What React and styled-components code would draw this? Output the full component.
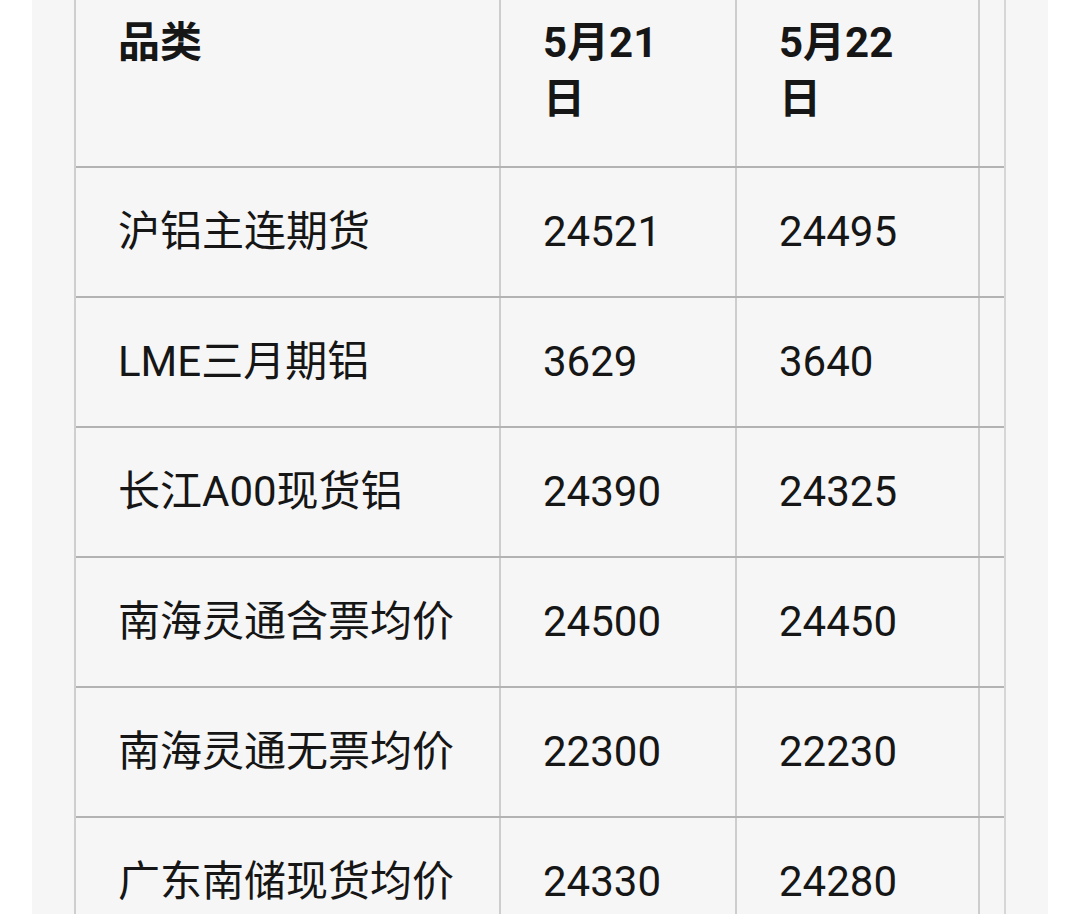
import React from 'react'
import styled, { createGlobalStyle } from 'styled-components'

const GlobalStyle = createGlobalStyle`
  html, body {
    margin: 0;
    padding: 0;
    background: #ffffff;
  }
  body {
    font-family: Roboto, "Noto Sans CJK SC", "Noto Sans", sans-serif;
    color: #161616;
  }
`

const dates = ['5月21', '5月22']

const rows = [
  { name: '沪铝主连期货', values: ['24521', '24495'] },
  { name: 'LME三月期铝', values: ['3629', '3640'] },
  { name: '长江A00现货铝', values: ['24390', '24325'] },
  { name: '南海灵通含票均价', values: ['24500', '24450'] },
  { name: '南海灵通无票均价', values: ['22300', '22230'] },
  { name: '广东南储现货均价', values: ['24330', '24280'] },
]

const App = () => {
  return (
    <Page>
      <GlobalStyle />
      <Panel>
        <ScrollBox>
          <Table>
            <colgroup>
              <col style={{ width: 424 }} />
              <col style={{ width: 236 }} />
              <col style={{ width: 243 }} />
              <col style={{ width: 243 }} />
            </colgroup>
            <thead>
              <tr>
                <HeadCell>品类</HeadCell>
                {dates.map((d) => (
                  <HeadCell key={d}>
                    {d}
                    <br />日
                  </HeadCell>
                ))}
                <HeadCell />
              </tr>
            </thead>
            <tbody>
              {rows.map((row) => (
                <tr key={row.name}>
                  <Cell>{row.name}</Cell>
                  {row.values.map((v, i) => (
                    <Cell key={i}>{v}</Cell>
                  ))}
                  <Cell />
                </tr>
              ))}
            </tbody>
          </Table>
        </ScrollBox>
      </Panel>
    </Page>
  )
}

const Page = styled.div`
  height: 914px;
  overflow: hidden;
  background: #ffffff;
`

const Panel = styled.div`
  margin: 0 32px;
  height: 914px;
  background: #f6f6f6;
  padding-left: 42px;
  overflow: hidden;
`

const ScrollBox = styled.div`
  width: 928px;
  margin-top: -20px;
  overflow: hidden;
  border-left: 2px solid #cfcfcf;
  border-right: 2px solid #d6d6d6;
`

const Table = styled.table`
  table-layout: fixed;
  border-collapse: collapse;
  width: 1146px;
  font-size: 42px;
  line-height: 56px;
`

const HeadCell = styled.th`
  text-align: left;
  font-weight: 700;
  vertical-align: top;
  padding: 35px 42px 39px 42px;
  border-left: 2px solid #cdcdcd;
  border-bottom: 2px solid #b3b3b3;
  &:first-child {
    border-left: none;
  }
`

const Cell = styled.td`
  text-align: left;
  font-weight: 400;
  padding: 36px 42px 36px 42px;
  height: 56px;
  border-left: 2px solid #cdcdcd;
  border-bottom: 2px solid #b3b3b3;
  white-space: nowrap;
  &:first-child {
    border-left: none;
  }
`

export default App
